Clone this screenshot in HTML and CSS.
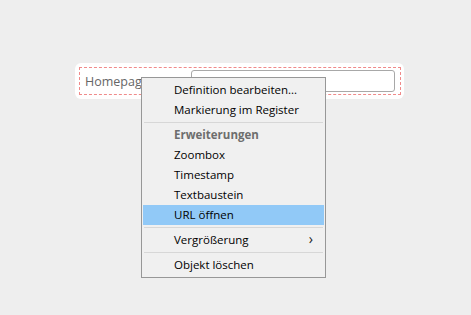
FILE: index.html
```html
<!DOCTYPE html>
<html lang="de">
<head>
  <meta charset="UTF-8" />
  <title>Kontextmenü</title>
  <link rel="stylesheet" href="styles.css">
</head>
<body>

<div class="feld-karte">
  <div class="feld">
    <label class="feld-label">Homepage</label>
    <input class="feld-input" type="text">
  </div>
</div>

<ul class="menu">
  <li class="menu-item">Definition bearbeiten...</li>
  <li class="menu-item">Markierung im Register</li>
  <li class="menu-sep"></li>
  <li class="menu-item menu-titel">Erweiterungen</li>
  <li class="menu-item">Zoombox</li>
  <li class="menu-item">Timestamp</li>
  <li class="menu-item">Textbaustein</li>
  <li class="menu-item aktiv">URL öffnen</li>
  <li class="menu-sep"></li>
  <li class="menu-item untermenu">Vergrößerung <span class="pfeil">&#8250;</span></li>
  <li class="menu-sep"></li>
  <li class="menu-item">Objekt löschen</li>
</ul>

</body>
</html>
```

FILE: styles.css
```css
body {
  margin: 0;
  background-color: #eeeeee;
  font-family: "Open Sans", "Noto Sans", Arial, sans-serif;
  font-size: 11.5px;
  color: #000;
}

.feld-karte {
  width: 322px;
  margin: 63px 0 0 75px;
  padding: 4px 3px 4px 4px;
  background: white;
  border-radius: 6px;
}

.feld {
  display: flex;
  align-items: center;
  height: 26px;
  border: 1px dashed #f08a8a;
  padding: 0 5px 0 5px;
}

.feld-label {
  width: 106px;
  color: #666;
  font-size: 12.5px;
}

.feld-input {
  flex: 1;
  height: 22px;
  box-sizing: border-box;
  margin: 0;
  border: 1px solid #a8a8a8;
  border-radius: 3px;
  background: white;
}

.menu {
  position: absolute;
  left: 141px;
  top: 77px;
  width: 181px;
  margin: 0;
  padding: 2px 1px;
  list-style: none;
  background: #f0f0f0;
  border: 1px solid #979797;
}

.menu-item {
  height: 20px;
  line-height: 20px;
  padding-left: 31px;
  position: relative;
}

.menu-titel {
  font-weight: bold;
  color: #6d6d6d;
}

.menu-item.aktiv {
  background: #91c9f7;
}

.menu-sep {
  height: 1px;
  margin: 2px 1px 2px 1px;
  background: #d7d7d7;
}

.pfeil {
  position: absolute;
  right: 11px;
  top: -1px;
  font-size: 14px;
  color: #222;
}
```
